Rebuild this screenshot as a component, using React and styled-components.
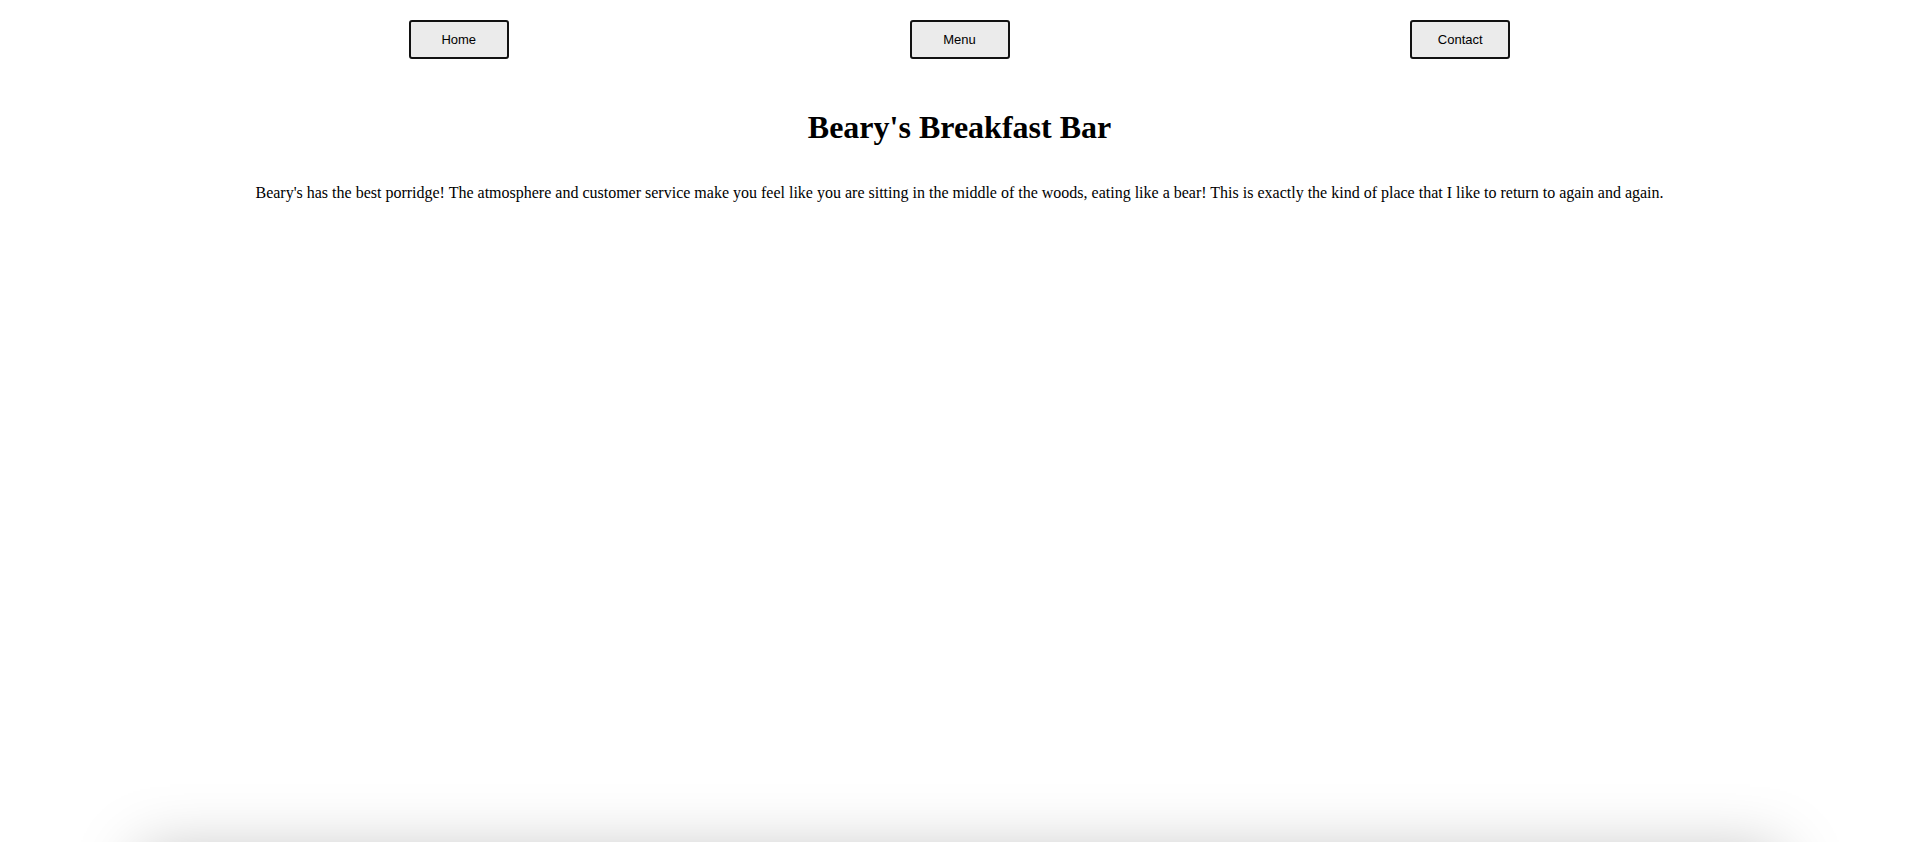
import React from 'react';
import styled, { createGlobalStyle } from 'styled-components';

const GlobalStyle = createGlobalStyle`
  body {
    margin: 8px;
    background: #ffffff;
    font-family: "Liberation Serif", "Times New Roman", serif;
    color: #000;
  }
`;

const Nav = styled.nav`
  display: flex;
  justify-content: space-evenly;
  align-items: center;
  padding-top: 12px;
`;

const NavButton = styled.button`
  width: 100px;
  height: 39px;
  background: #ebebeb;
  border: 2px solid #111;
  border-radius: 3px;
  font-family: "Liberation Sans", Arial, sans-serif;
  font-size: 13px;
  color: #000;
  cursor: pointer;
`;

const Header = styled.header`
  text-align: center;
  margin-top: 50px;
`;

const Title = styled.h1`
  font-size: 32px;
  font-weight: bold;
  margin: 21px 0 38px;
`;

const Review = styled.p`
  font-size: 16px;
  margin: 16px 0;
`;

// sits just under the fold, only its shadow shows
const Gallery = styled.section`
  width: 1640px;
  height: 400px;
  margin: 650px auto 0;
  background: #fff;
  box-shadow: 0 0 60px rgba(0, 0, 0, 0.25);
`;

const links = ['Home', 'Menu', 'Contact'];

const App = () => {
  return (
    <>
      <GlobalStyle />
      <Nav>
        {links.map((l) => (
          <NavButton key={l}>{l}</NavButton>
        ))}
      </Nav>
      <Header>
        <Title>Beary's Breakfast Bar</Title>
        <Review>
          Beary's has the best porridge! The atmosphere and customer service make you feel like you are sitting in the middle of the woods, eating like a bear! This is exactly the kind of place that I like to return to again and again.
        </Review>
      </Header>
      <Gallery />
    </>
  );
};

export default App;
